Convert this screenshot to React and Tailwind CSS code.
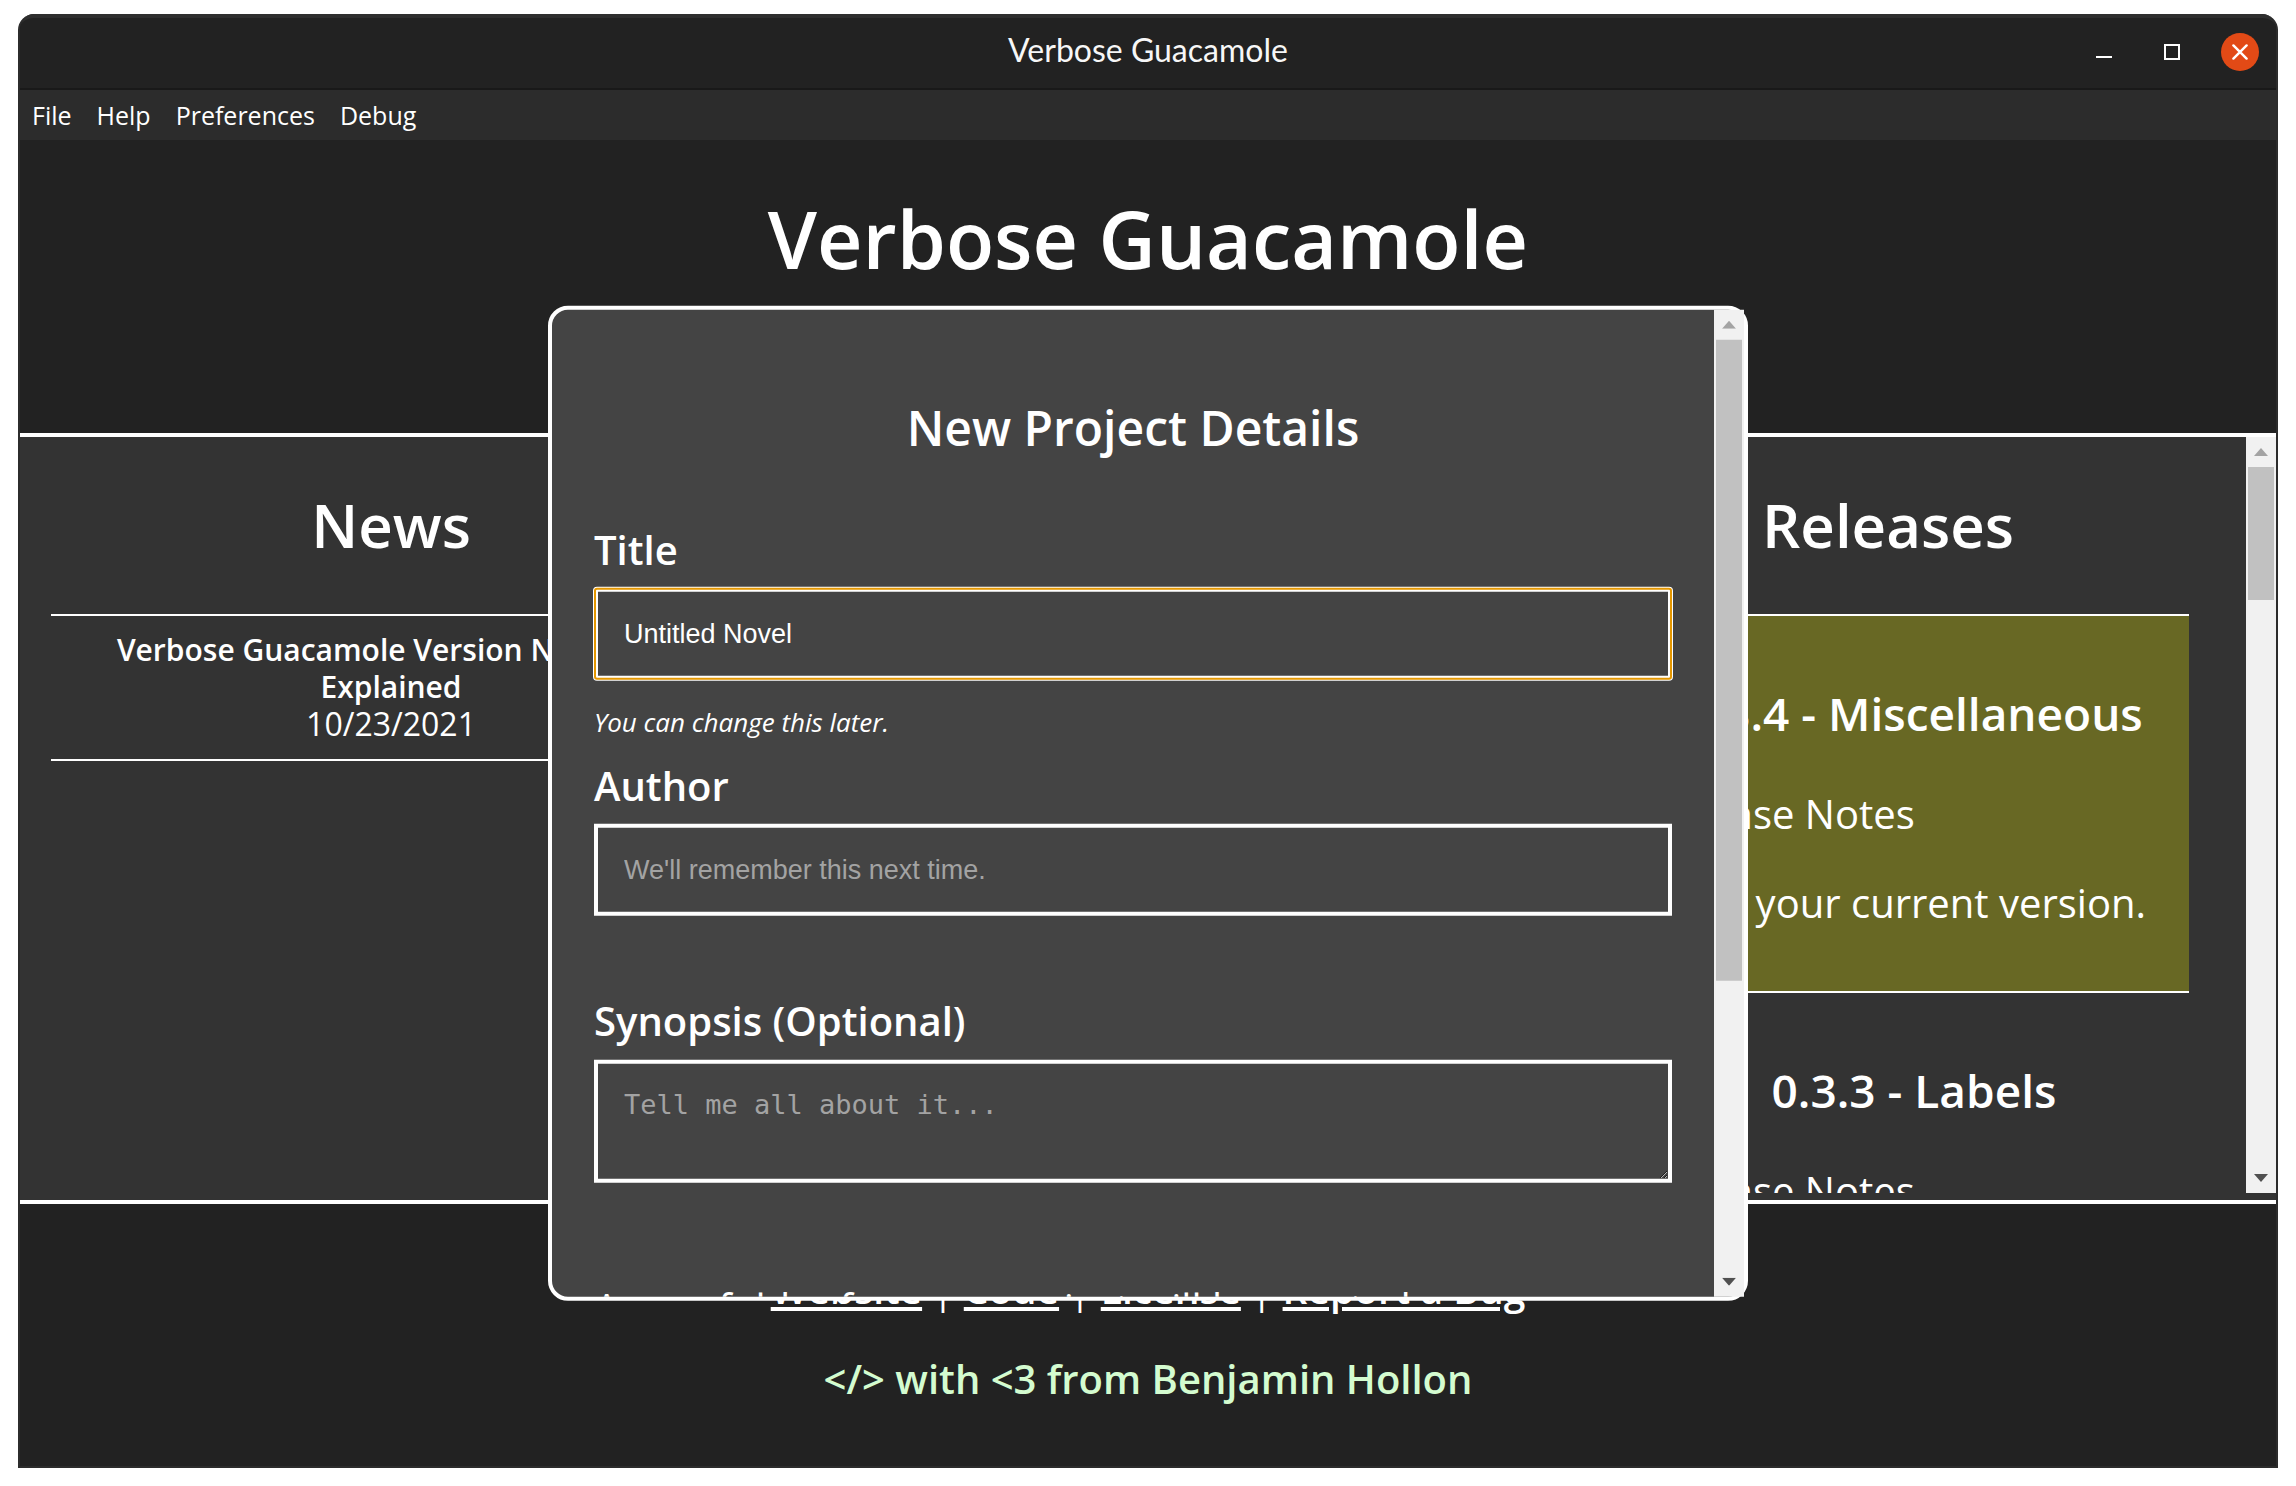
const menus = ["File", "Help", "Preferences", "Debug"];
const links = ["Website", "Code", "License", "Report a Bug"];

function Arrow({ down, className }) {
  return (
    <div className="flex h-[30px] shrink-0 items-center justify-center">
      <svg width="14" height="8" viewBox="0 0 14 8" className={className}>
        <path d={down ? "M0 0H14L7 8Z" : "M0 8H14L7 0Z"} fill="currentColor" />
      </svg>
    </div>
  );
}

function Scrollbar({ thumb, rest }) {
  return (
    <div aria-hidden="true" className="flex w-[30px] shrink-0 flex-col bg-[#f1f1f1]">
      <Arrow className="text-[#a3a3a3]" />
      <div className={"mx-[2px] basis-0 bg-[#c1c1c1] " + thumb} />
      <div className={"basis-0 " + rest} />
      <Arrow down className="text-[#505050]" />
    </div>
  );
}

function TitleBar() {
  return (
    <div className="grid h-[76px] shrink-0 grid-cols-[1fr_auto_1fr] items-center rounded-t-[14px] border-t-4 border-b-2 border-t-[#2e2e2e] border-b-[#191919] bg-[#222222] pb-[2px]">
      <div />
      <div className="pb-1 font-['Lato',sans-serif] text-[32px] leading-10 text-[#f7f7f7]">Verbose Guacamole</div>
      <div className="flex items-center justify-end gap-[30px] pr-[17px] text-white">
        <button aria-label="Minimize" className="flex size-[38px] items-center justify-center">
          <svg width="16" height="16" viewBox="0 0 16 16">
            <path d="M0 12h16v2H0z" fill="currentColor" />
          </svg>
        </button>
        <button aria-label="Maximize" className="flex size-[38px] items-center justify-center">
          <svg width="16" height="16" viewBox="0 0 16 16" fill="none" stroke="currentColor" strokeWidth="2">
            <rect x="1" y="1" width="14" height="14" />
          </svg>
        </button>
        <button aria-label="Close" className="flex size-[38px] items-center justify-center rounded-full bg-[#e24a16]">
          <svg width="16" height="16" viewBox="0 0 16 16" fill="none" stroke="currentColor" strokeWidth="2.4" strokeLinecap="round">
            <path d="M1.4 1.4l13.2 13.2M14.6 1.4L1.4 14.6" />
          </svg>
        </button>
      </div>
    </div>
  );
}

function Releases() {
  const heading = "pl-[52px] text-center text-[46px] leading-[64px] font-semibold whitespace-nowrap";
  return (
    <section className="w-1/3 pr-[57px] pl-[83px] pt-12">
      <h2 className="text-center text-[60px] leading-[80px] font-semibold">Releases</h2>
      <article className="mt-[49px] border-y-2 border-white bg-[#686824] pt-[65px] pb-[60px] text-[40px] leading-[56px]">
        <h3 className={heading}>0.3.4 - Miscellaneous</h3>
        <p className="mt-[41px] pl-16">Release Notes</p>
        <p className="mt-[33px] text-center whitespace-nowrap">This is your current version.</p>
      </article>
      <article className="pt-[65px] text-[40px] leading-[56px]">
        <h3 className={heading}>0.3.3 - Labels</h3>
        <p className="mt-[41px] pl-16">Release Notes</p>
      </article>
    </section>
  );
}

function NewProjectDialog() {
  const label = "block text-[40px] leading-[56px] font-semibold";
  const field =
    "block w-full border-4 border-white bg-[#444444] px-[26px] text-[27px] text-white outline-none placeholder:text-[#a3a3a3]";
  return (
    <div
      role="dialog"
      aria-labelledby="dialog-title"
      className="absolute top-1/2 left-1/2 flex h-3/4 w-[1200px] -translate-x-1/2 -translate-y-1/2 rounded-[20px] border-4 border-white bg-[#444444]"
    >
      <form className="min-w-0 flex-1 overflow-hidden rounded-l-2xl px-[42px] pt-[86px]">
        <h2 id="dialog-title" className="mb-[62px] text-center text-[48px] leading-[64px] font-semibold">
          New Project Details
        </h2>
        <label htmlFor="title" className={label}>Title</label>
        <input
          id="title"
          type="text"
          defaultValue="Untitled Novel"
          className="mt-[10px] block h-[92px] w-full rounded-[3px] border-4 border-white bg-[#444444] px-[26px] font-['Liberation_Sans',sans-serif] text-[27px] text-white ring-1 ring-white outline-2 -outline-offset-2 outline-[#e59700]"
        />
        <p className="mt-6 mb-[18px] text-[26px] leading-9 italic">You can change this later.</p>
        <label htmlFor="author" className={label}>Author</label>
        <input
          id="author"
          type="text"
          placeholder="We'll remember this next time."
          className={field + " mt-[10px] h-[92px] font-['Liberation_Sans',sans-serif]"}
        />
        <label htmlFor="synopsis" className={label + " mt-[77px]"}>Synopsis (Optional)</label>
        <textarea
          id="synopsis"
          rows="2"
          placeholder="Tell me all about it..."
          className={field + " mt-[11px] h-[123px] resize pt-[25px] pb-5 font-['DejaVu_Sans_Mono',monospace] leading-8"}
        />
        <p className="mt-[97px] text-[40px] leading-[56px] whitespace-nowrap">
          A new folder for your project will be created.
        </p>
      </form>
      <Scrollbar thumb="grow-[641]" rest="grow-[285]" />
    </div>
  );
}

export default function App() {
  return (
    <div className="h-screen bg-white px-[18px] pt-[14px] pb-[18px] font-['Open_Sans',sans-serif] text-white">
      <div className="flex h-full flex-col overflow-hidden rounded-t-2xl border-x-2 border-b-2 border-[#2c2c2c] bg-[#222222]">
        <TitleBar />
        <nav className="flex h-[50px] shrink-0 items-center gap-[25px] bg-[#2c2c2c] px-3 text-[25px] leading-9">
          {menus.map((m) => (
            <button key={m}>{m}</button>
          ))}
        </nav>
        <div className="relative flex min-h-0 flex-1 flex-col">
          <header className="shrink-0 pt-[51px] pb-[146px]">
            <h1 className="text-center text-[79px] leading-[96px] font-semibold">Verbose Guacamole</h1>
          </header>
          <main className="flex min-h-0 flex-1 border-y-4 border-white bg-[#333333] pb-[7px]">
            <div className="flex min-w-0 flex-1 overflow-hidden">
              <section className="w-1/3 px-[31px] pt-12 text-center">
                <h2 className="text-[60px] leading-[80px] font-semibold">News</h2>
                <article className="mt-[49px] border-y-2 border-white px-8 pt-[15px] pb-[17px] leading-[37px]">
                  <h3 className="text-[30px] leading-[37px] font-semibold">Verbose Guacamole Version Numbers Explained</h3>
                  <p className="text-[32px] leading-[37px]">10/23/2021</p>
                </article>
              </section>
              <section className="w-1/3" />
              <Releases />
            </div>
            <Scrollbar thumb="grow-[133]" rest="grow-[563]" />
          </main>
          <footer className="shrink-0 pt-[57px] pb-[59px] text-center leading-[56px]">
            <p className="text-[39px] leading-[56px]">
              {links.map((l, i) => (
                <span key={l}>
                  {i > 0 && " | "}
                  <a href="#" className="font-semibold underline decoration-4 underline-offset-3">{l}</a>
                </span>
              ))}
            </p>
            <p className="mt-[34px] text-[40px] leading-[56px] font-semibold text-[#d4fcd0]">{"</> with <3 from Benjamin Hollon"}</p>
          </footer>
          <NewProjectDialog />
        </div>
      </div>
    </div>
  );
}
